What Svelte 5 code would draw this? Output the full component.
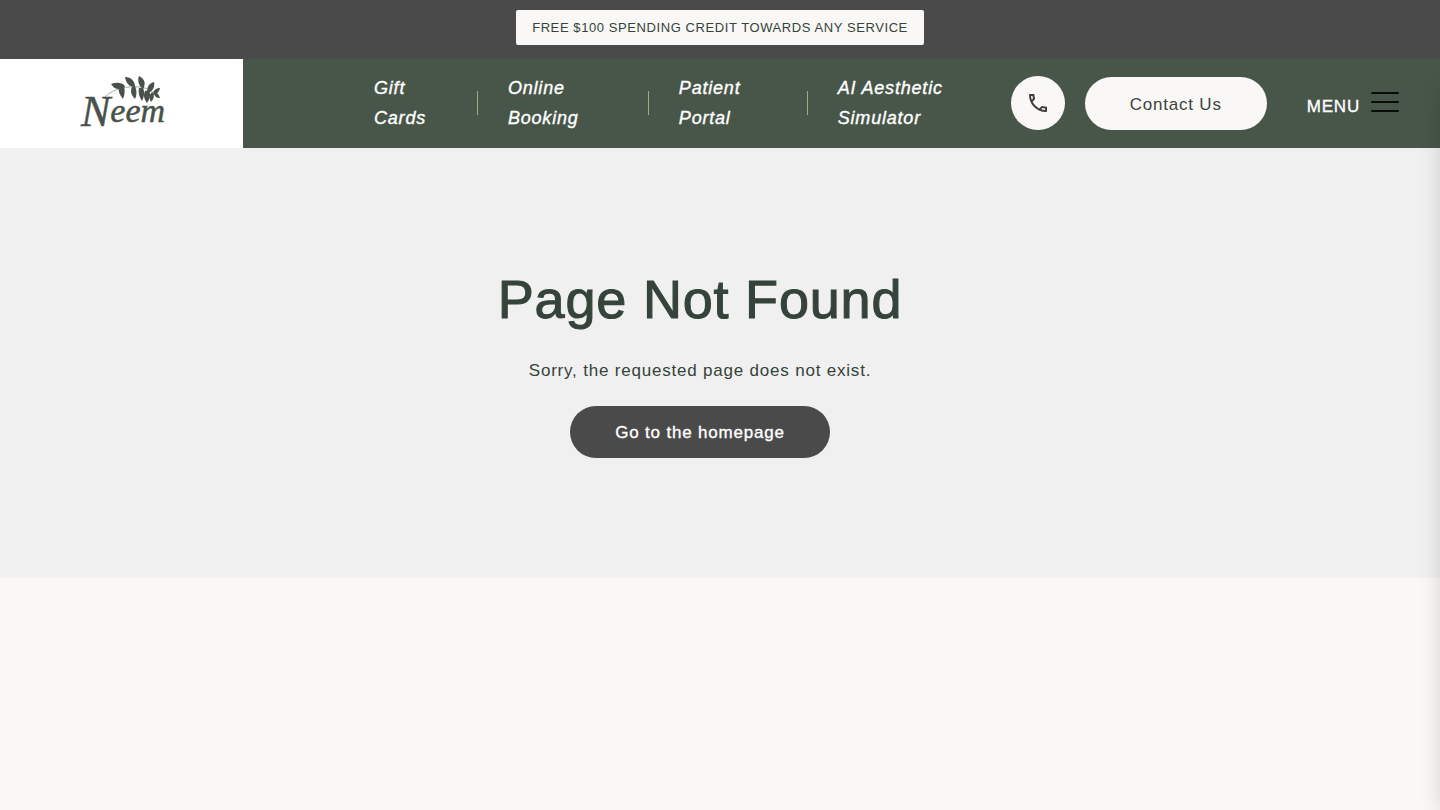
<script lang="ts">
  type NavItem = {
    label: string;
    href: string;
  };

  const navItems: NavItem[] = [
    { label: 'Gift Cards', href: '#gift-cards' },
    { label: 'Online Booking', href: '#booking' },
    { label: 'Patient Portal', href: '#portal' },
    { label: 'AI Aesthetic Simulator', href: '#simulator' },
  ];

  let menuOpen = $state(false);
</script>

<div class="page">
  <div class="promo">
    <a class="promo__link" href="#offer">FREE $100 SPENDING CREDIT TOWARDS ANY SERVICE</a>
  </div>

  <header class="header">
    <a class="header__logo" href="#home" aria-label="Neem">
      <svg width="90" height="60" viewBox="0 0 90 60">
        <path d="M28 23C37 14 50 12 63 13c6 1 11 3 14 6" fill="none" stroke="#a4aaa4" />
        <g fill="#48524a">
          <path d="M34 10c5-2 11-2 14 2-1 2-3 3-6 3-4 0-6-2-8-5z" />
          <path d="M42 14l5-2c1 5 1 8-1 13-3-4-5-7-4-11z" />
          <path d="M48 3c6 0 10 4 10 10-6 0-9-4-10-10z" />
          <path d="M55 13l3-1c2 5 2 9 0 13-4-4-5-8-3-12z" />
          <path d="M62 2c6 3 7 8 4 13-4-3-6-8-4-13z" />
          <path d="M62 14h4c2 4 1 9-1 13-3-4-4-9-3-13z" />
          <path d="M77 8c1 5-1 9-6 11-2-5 1-10 6-11z" />
          <path d="M68 17l4-1c2 5 1 9-2 13-3-4-4-8-2-12z" />
          <path d="M83 14c-1 4-3 6-7 7 0-5 3-7 7-7z" />
          <path d="M75 18c3 3 2 7-1 10-2-4-2-7 1-10z" />
          <path d="M77 18c3 0 5 3 6 6-4 0-6-2-6-6z" />
        </g>
        <text class="logo-text" x="4" y="52"><tspan class="logo-text__initial">N</tspan><tspan dy="-4">eem</tspan></text>
      </svg>
    </a>

    <nav class="nav" aria-label="Quick links">
      {#each navItems as item (item.href)}
        <div class="nav__item"><a href={item.href}>{item.label}</a></div>
      {/each}
    </nav>

    <div class="header__actions">
      <a class="phone" href="#call" aria-label="Call us">
        <svg width="24" height="24" viewBox="0 0 24 24" fill="#3f3f3f">
          <path d="M6.54 5c.06.89.21 1.76.45 2.59l-1.2 1.2c-.41-1.2-.67-2.47-.76-3.79h1.51m9.86 12.02c.85.24 1.72.39 2.6.45v1.49c-1.32-.09-2.59-.35-3.8-.75l1.2-1.19M7.5 3H4c-.55 0-1 .45-1 1 0 9.39 7.61 17 17 17 .55 0 1-.45 1-1v-3.49c0-.55-.45-1-1-1-1.24 0-2.45-.2-3.57-.57-.1-.04-.21-.05-.31-.05-.26 0-.51.1-.71.29l-2.2 2.2c-2.83-1.45-5.15-3.76-6.59-6.59l2.2-2.2c.28-.28.36-.67.25-1.02C8.7 6.45 8.5 5.25 8.5 4c0-.55-.45-1-1-1z" />
        </svg>
      </a>
      <a class="pill pill--light" href="#contact">Contact Us</a>
    </div>

    <button class="menu" type="button" aria-expanded={menuOpen} onclick={() => (menuOpen = !menuOpen)}>
      <span>MENU</span>
      <svg width="28" height="20" viewBox="0 0 28 20" aria-hidden="true">
        <path d="M1 1h26M1 10h26M1 19h26" stroke="#090d0a" stroke-width="1.8" stroke-linecap="round" />
      </svg>
    </button>
  </header>

  <main class="message">
    <h1>Page Not Found</h1>
    <p>Sorry, the requested page does not exist.</p>
    <a class="pill pill--dark" href="#home">Go to the homepage</a>
  </main>

  <aside class="drawer" class:drawer--open={menuOpen} aria-label="Menu"></aside>
</div>

<style>
  :global(body) {
    background: #f9f8f6;
  }

  .page {
    color: #35433a;
    font-family: 'Liberation Sans', Arial, sans-serif;
    font-size: 16px;
    letter-spacing: .05em;
  }

  a {
    color: inherit;
    text-decoration: none;
  }

  .promo {
    display: flex;
    justify-content: center;
    padding: 10px 0 14px;
    background: #4a4a4a;
  }

  .promo__link {
    padding: 0 16px;
    border-radius: 2px;
    background: #f9f8f6;
    font-size: 13px;
    letter-spacing: .045em;
    line-height: 35px;
  }

  .header {
    display: flex;
    align-items: center;
    min-height: 88px;
    padding: 0 41px 1px 0;
    background: #485649;
    color: #fff;
  }

  .header__logo {
    display: flex;
    flex: none;
    align-items: center;
    align-self: stretch;
    justify-content: center;
    width: 243px;
    margin-bottom: -1px;
    background: #fff;
  }

  .header__logo svg {
    overflow: visible;
  }

  .logo-text {
    fill: #48524a;
    font-family: 'Liberation Serif', serif;
    font-size: 34px;
    font-style: italic;
    letter-spacing: 0;
    stroke: #48524a;
    stroke-width: .5;
  }

  .logo-text__initial {
    font-size: 44px;
  }

  .nav {
    display: grid;
    flex: 1;
    grid-template-columns: 133fr 171fr 159fr 204fr;
    margin-left: 101px;
    font-size: 18px;
    font-style: italic;
    line-height: 30px;
    -webkit-text-stroke: .02em;
  }

  .nav__item {
    display: flex;
    align-items: center;
    padding: 0 30px;
  }

  .nav__item + .nav__item::before {
    height: 24px;
    margin: 0 30px 0 -30px;
    border-left: 1px solid #a9a77f;
    content: '';
  }

  .header__actions {
    display: flex;
    align-items: center;
    gap: 20px;
    font-size: 17px;
  }

  .phone {
    display: grid;
    width: 54px;
    height: 54px;
    place-items: center;
    border-radius: 50%;
    background: #f9f8f6;
  }

  .pill {
    padding: 2px 45px 0;
    border-radius: 27px;
    line-height: 51px;
    white-space: nowrap;
  }

  .pill--light {
    background: #f9f8f6;
    color: #3b443d;
  }

  .pill--dark {
    background: #4a4a4a;
    color: #fff;
    line-height: 50px;
    -webkit-text-stroke: .02em;
  }

  .menu {
    display: flex;
    align-items: flex-start;
    gap: 11px;
    margin-left: 40px;
    padding: 2px 0 0;
    border: 0;
    background: none;
    color: #fff;
    cursor: pointer;
    font: inherit;
    font-size: 17px;
    letter-spacing: inherit;
    -webkit-text-stroke: .02em;
  }

  .menu span {
    margin-top: 5px;
    line-height: 20px;
  }

  .message {
    display: flex;
    flex-direction: column;
    align-items: center;
    padding: 120px 40px 120px 0;
    background: #f0f0f0;
    font-size: 17px;
  }

  .message h1 {
    margin: 0;
    font-size: 54px;
    font-weight: 400;
    line-height: 62px;
    -webkit-text-stroke: .02em;
  }

  .message p {
    margin: 26px 0 20px;
    line-height: 30px;
  }

  .drawer {
    position: fixed;
    top: 89px;
    bottom: 0;
    left: 100%;
    width: 320px;
    background: #f9f8f6;
    box-shadow: 0 0 20px rgb(0 0 0 / .15);
  }

  .drawer--open {
    right: 0;
    left: auto;
  }
</style>
